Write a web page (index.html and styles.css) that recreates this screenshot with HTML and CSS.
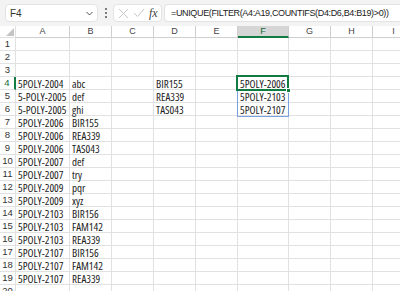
FILE: index.html
```html
<!DOCTYPE html>
<html>
<head>
<meta charset="utf-8">
<title>UNIQUE FILTER</title>
<link rel="stylesheet" href="styles.css">
</head>
<body>
  <div class="bar">
    <div class="namebox">
      <span>F4</span>
      <svg class="chev" width="7" height="5" viewBox="0 0 7 5"><path d="M0.5 1 L3.5 4 L6.5 1" fill="none" stroke="#555" stroke-width="1"/></svg>
    </div>
    <div class="dots"><i></i><i></i><i></i></div>
    <div class="fxbox">
      <svg width="11" height="11" viewBox="0 0 11 11"><path d="M1 1 L10 10 M10 1 L1 10" stroke="#c8c8c8" stroke-width="1"/></svg>
      <svg width="12" height="10" viewBox="0 0 12 10"><path d="M1 5 L4.5 8.5 L11 1" fill="none" stroke="#c8c8c8" stroke-width="1"/></svg>
      <span class="fx">fx</span>
    </div>
    <div class="formula">=UNIQUE(FILTER(A4:A19,COUNTIFS(D4:D6,B4:B19)&gt;0))</div>
  </div>

  <div class="sheet" id="sheet">
    <div class="corner"></div>
  </div>
  <div class="spill"></div>
  <div class="active"></div>
  <div class="handle"></div>

  <script>
    var cols = ["A","B","C","D","E","F","G","H","I"];
    var data = {
      4: ["5POLY-2004","abc","","BIR155","","5POLY-2006"],
      5: ["5-POLY-2005","def","","REA339","","5POLY-2103"],
      6: ["5-POLY-2005","ghi","","TAS043","","5POLY-2107"],
      7: ["5POLY-2006","BIR155"],
      8: ["5POLY-2006","REA339"],
      9: ["5POLY-2006","TAS043"],
      10: ["5POLY-2007","def"],
      11: ["5POLY-2007","try"],
      12: ["5POLY-2009","pqr"],
      13: ["5POLY-2009","xyz"],
      14: ["5POLY-2103","BIR156"],
      15: ["5POLY-2103","FAM142"],
      16: ["5POLY-2103","REA339"],
      17: ["5POLY-2107","BIR156"],
      18: ["5POLY-2107","FAM142"],
      19: ["5POLY-2107","REA339"]
    };
    var sheet = document.getElementById("sheet");
    var html = "";
    for (var c = 0; c < cols.length; c++)
      html += '<div class="colhead' + (cols[c] == "F" ? ' sel' : '') + '">' + cols[c] + '</div>';
    for (var r = 1; r <= 20; r++)
    {
      html += '<div class="rowhead' + (r == 4 ? ' sel' : '') + '">' + r + '</div>';
      var row = data[r] || [];
      for (var c = 0; c < cols.length; c++)
        html += '<div class="cell">' + (row[c] || "") + '</div>';
    }
    sheet.insertAdjacentHTML("beforeend", html);
  </script>
</body>
</html>
```

FILE: styles.css
```css
body {
    margin: 0;
    width: 400px;
    height: 291px;
    overflow: hidden;
    background: #ffffff;
    font-family: "Liberation Sans", sans-serif;
    color: #222;
}

.bar {
    height: 26px;
    background: #f3f3f3;
    display: flex;
    align-items: center;
    padding-left: 5px;
    box-sizing: border-box;
}

.namebox {
    flex: none;
    width: 93px;
    height: 18px;
    background: #fff;
    border: 1px solid #e3e3e3;
    border-radius: 4px;
    box-sizing: border-box;
    display: flex;
    align-items: center;
    justify-content: space-between;
    padding: 0 4px 0 4px;
    font-size: 10px;
    color: #333;
}

.dots {
    flex: none;
    width: 15px;
    display: flex;
    flex-direction: column;
    align-items: center;
    gap: 2px;
}

.dots i {
    width: 2px;
    height: 2px;
    background: #555;
    border-radius: 1px;
}

.fxbox {
    flex: none;
    width: 49px;
    height: 18px;
    background: #fff;
    border: 1px solid #e3e3e3;
    border-radius: 4px;
    box-sizing: border-box;
    display: flex;
    align-items: center;
    gap: 4px;
    padding-left: 4px;
}

.fx {
    font-family: "Liberation Serif", serif;
    font-style: italic;
    font-size: 12px;
    color: #444;
}

.formula {
    margin-left: 2px;
    flex: 1;
    min-width: 0;
    height: 18px;
    background: #fff;
    border: 1px solid #e3e3e3;
    border-right: none;
    border-radius: 4px 0 0 4px;
    box-sizing: border-box;
    padding-left: 6px;
    font-size: 9px;
    letter-spacing: -0.35px;
    line-height: 16px;
    white-space: nowrap;
    overflow: hidden;
    color: #222;
}

.sheet {
    display: grid;
    grid-template-columns: 16px 54px 42px 42px 42px 42px 51px 42px 42px 42px;
    grid-template-rows: 12px;
    grid-auto-rows: 13px;
}

.sheet > div {
    border-right: 1px solid #e1e1e1;
    border-bottom: 1px solid #e1e1e1;
    box-sizing: border-box;
    white-space: nowrap;
    overflow: visible;
}

.corner {
    position: relative;
    background: #fff;
}

.corner::after {
    content: "";
    position: absolute;
    right: 1px;
    bottom: 1px;
    border-left: 8px solid transparent;
    border-bottom: 8px solid #c4c4c4;
}

.colhead {
    text-align: center;
    line-height: 11px;
    color: #444;
    font-size: 9px;
    border-right-color: #cfcfcf !important;
    border-bottom-color: #cfcfcf !important;
}

.colhead.sel {
    background: #d6d6d6;
    color: #0f6b36;
    border-bottom: 2px solid #107c41 !important;
}

.rowhead {
    text-align: center;
    line-height: 12px;
    color: #333;
    font-size: 9.5px;
}

.rowhead.sel {
    color: #0f6b36;
    border-right: 2px solid #107c41 !important;
}

.cell {
    padding-left: 2px;
    line-height: 13px;
    font-family: "Open Sans", sans-serif;
    font-stretch: 75%;
    font-size: 11px;
}

.spill {
    position: absolute;
    left: 237px;
    top: 76px;
    width: 52px;
    height: 41px;
    border: 1px solid #7ba1e0;
    box-sizing: border-box;
}

.active {
    position: absolute;
    left: 236px;
    top: 75px;
    width: 53px;
    height: 16px;
    border: 2px solid #107c41;
    box-sizing: border-box;
}

.handle {
    position: absolute;
    left: 286px;
    top: 88px;
    width: 5px;
    height: 5px;
    background: #107c41;
    border: 1px solid #fff;
    box-sizing: border-box;
}
```
